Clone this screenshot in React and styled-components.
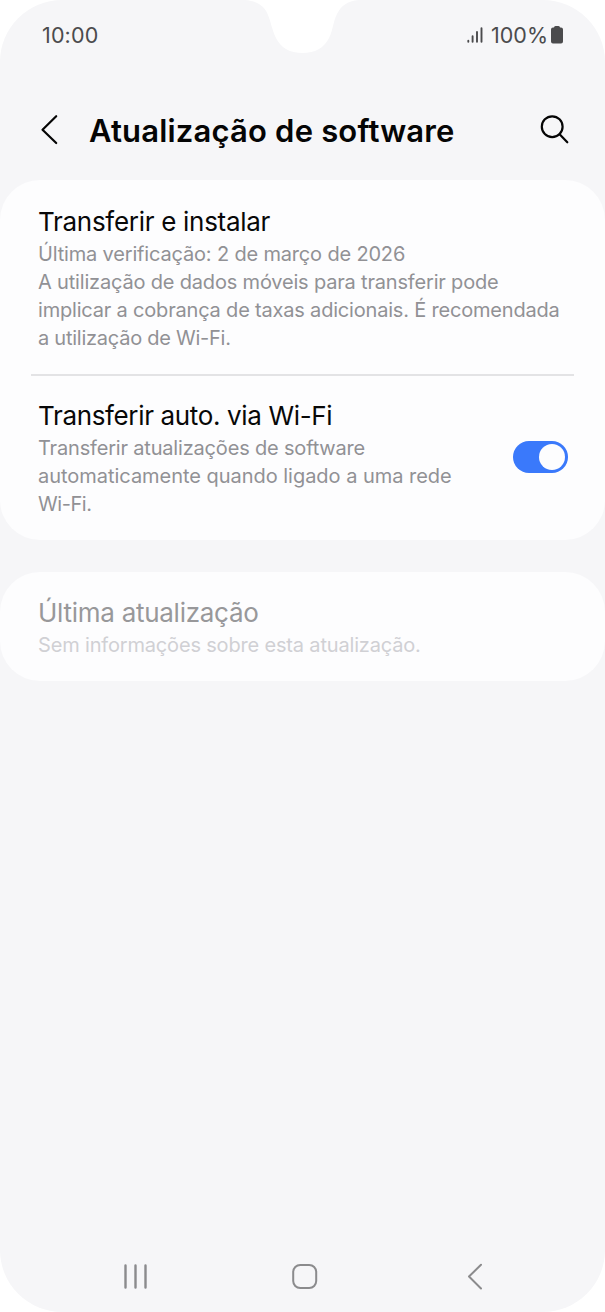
import React, { useState } from "react";
import styled, { createGlobalStyle } from "styled-components";

const GlobalStyle = createGlobalStyle`
  *, *::before, *::after { box-sizing: border-box; }
  body { margin: 0; background: #fff; font-family: Inter, "Liberation Sans", sans-serif; }
  svg { display: block; }
`;

const Screen = styled.main`
  position: relative;
  display: flex;
  flex-direction: column;
  width: 605px;
  height: 1312px;
  overflow: hidden;
  background: #f6f6f8;
  border-radius: 62px;
`;

const Notch = styled.svg`
  position: absolute;
  top: 0;
  left: 245px;
`;

const StatusBar = styled.header`
  display: flex;
  align-items: center;
  justify-content: space-between;
  height: 70px;
  padding: 0 42px;
  color: #4b4b4d;
`;

const StatusGroup = styled.div`
  display: flex;
  align-items: center;
`;

const Line = styled.span`
  display: block;
  white-space: nowrap;
  letter-spacing: ${(p) => p.$track || 0}px;
`;

const StatusText = styled(Line)`
  font-size: 21.5px;
  line-height: 28px;
`;

const BatteryLevel = styled(StatusText)`
  margin: 0 3px 0 7px;
`;

const AppBar = styled.div`
  display: flex;
  align-items: center;
  height: 110px;
  padding: 10px 36px 0 40px;
`;

const IconButton = styled.button`
  display: flex;
  padding: 0;
  border: 0;
  background: none;
  color: ${(p) => p.$color || "#050505"};
`;

const Heading = styled.h1`
  flex: 1;
  margin: 0 0 0 30px;
  padding-top: 2px;
  font-size: 31px;
  font-weight: 600;
  line-height: 40px;
  color: #050505;
`;

const Sections = styled.div`
  display: flex;
  flex: 1;
  flex-direction: column;
  gap: 32px;
`;

const Card = styled.section`
  padding: 0 31px;
  border-radius: 40px;
  background: #fdfdfe;
`;

const Row = styled.div`
  display: flex;
  align-items: center;
  justify-content: space-between;
  padding: ${(p) => p.$top}px 6px 22px 7px;
  color: ${(p) => (p.$disabled ? "#98989a" : "#080808")};
`;

const Divider = styled.hr`
  height: 2px;
  margin: 0;
  border: 0;
  background: #e3e3e5;
`;

const RowTitle = styled.h2`
  margin: 0;
  font-size: 26px;
  font-weight: 400;
  line-height: 37px;
`;

const RowText = styled.p`
  margin: 0;
  font-size: 20px;
  line-height: 28px;
  color: ${(p) => (p.$disabled ? "#d0d0d4" : "#919195")};
`;

const Toggle = styled.button`
  display: flex;
  flex: none;
  justify-content: ${(p) => (p.$on ? "flex-end" : "flex-start")};
  width: 55px;
  height: 32px;
  margin-bottom: 1px;
  padding: 3px;
  border: 0;
  border-radius: 16px;
  background: ${(p) => (p.$on ? "#3a79fb" : "#b9b9bd")};
`;

const Knob = styled.span`
  width: 26px;
  height: 26px;
  border-radius: 50%;
  background: #fdfdfe;
`;

const NavBar = styled.nav`
  display: grid;
  grid-template-columns: 169px 175px 16px;
  align-items: start;
  height: 71px;
  padding: 21px 0 0 123px;
`;

function SettingRow({ title, lines, disabled, top, children }) {
  return (
    <Row $disabled={disabled} $top={top}>
      <div>
        <RowTitle><Line $track={title[1]}>{title[0]}</Line></RowTitle>
        <RowText $disabled={disabled}>
          {lines.map(([text, track]) => <Line key={text} $track={track}>{text}</Line>)}
        </RowText>
      </div>
      {children}
    </Row>
  );
}

export default function App() {
  const [auto, setAuto] = useState(true);
  return (
    <>
      <GlobalStyle />
      <Screen>
        <Notch width="114" height="54" viewBox="0 0 114 54" fill="#fff">
          <path d="M0 0C13 1 20 7 23 15C26 22 27 30 31 38C36 48 45 53 57.500 53C70 53 79 48 84 38C88 30 88 22 92 14C96 6 102 1 114 0Z" />
        </Notch>
        <StatusBar>
          <StatusText $track={0.15}>10:00</StatusText>
          <StatusGroup>
            <svg width="17" height="18" viewBox="0 0 17 18" fill="none" stroke="currentColor" strokeWidth="1.900" strokeLinecap="round">
              <path d="M1.300 14.800v1M5.600 10.200v5.600M10 6v9.800M14.500 2.300v13.500" />
            </svg>
            <BatteryLevel>100%</BatteryLevel>
            <svg width="12" height="18" viewBox="0 0 12 18" fill="currentColor">
              <path d="M3 1.500Q3 0 4.500 0H7.500Q9 0 9 1.500H10Q12 1.500 12 3.500V15.500Q12 17.500 10 17.500H2Q0 17.500 0 15.500V3.500Q0 1.500 2 1.500Z" />
            </svg>
          </StatusGroup>
        </StatusBar>
        <AppBar>
          <IconButton aria-label="Voltar">
            <svg width="19" height="32" viewBox="0 0 19 32" fill="none" stroke="currentColor" strokeWidth="2.200" strokeLinecap="round" strokeLinejoin="round">
              <path d="M16.200 2.200L2.500 15.700L16.200 29" />
            </svg>
          </IconButton>
          <Heading><Line $track={0.18}>Atualização de software</Line></Heading>
          <IconButton aria-label="Pesquisar">
            <svg width="30" height="30" viewBox="0 0 30 30" fill="none" stroke="currentColor" strokeWidth="2.200" strokeLinecap="round">
              <circle cx="13.200" cy="11.700" r="10.400" />
              <path d="M20.600 19.200L28.300 27.300" />
            </svg>
          </IconButton>
        </AppBar>
        <Sections>
          <Card>
            <SettingRow
              top={23}
              title={["Transferir e instalar", -0.29]}
              lines={[
                ["Última verificação: 2 de março de 2026", -0.17],
                ["A utilização de dados móveis para transferir pode", -0.18],
                ["implicar a cobrança de taxas adicionais. É recomendada", -0.19],
                ["a utilização de Wi-Fi.", -0.25],
              ]}
            />
            <Divider />
            <SettingRow
              top={21}
              title={["Transferir auto. via Wi-Fi", -0.35]}
              lines={[
                ["Transferir atualizações de software", -0.18],
                ["automaticamente quando ligado a uma rede", -0.03],
                ["Wi-Fi.", -0.45],
              ]}
            >
              <Toggle role="switch" aria-checked={auto} $on={auto} onClick={() => setAuto(!auto)}>
                <Knob />
              </Toggle>
            </SettingRow>
          </Card>
          <Card>
            <SettingRow
              disabled
              top={22}
              title={["Última atualização", -0.27]}
              lines={[["Sem informações sobre esta atualização.", -0.17]]}
            />
          </Card>
        </Sections>
        <NavBar>
          <IconButton aria-label="Recentes" $color="#8b8b8d">
            <svg width="25" height="28" viewBox="0 0 25 28" stroke="currentColor" strokeWidth="2.400" strokeLinecap="round">
              <path d="M2.500 3.500V25.500M12.500 3.500V25.500M22.500 3.500V25.500" />
            </svg>
          </IconButton>
          <IconButton aria-label="Início" $color="#8b8b8d">
            <svg width="26" height="28" viewBox="0 0 26 28" fill="none" stroke="currentColor" strokeWidth="2">
              <rect x="1.200" y="3" width="23" height="23" rx="7" />
            </svg>
          </IconButton>
          <IconButton aria-label="Voltar" $color="#8b8b8d">
            <svg width="16" height="28" viewBox="0 0 16 28" fill="none" stroke="currentColor" strokeWidth="2" strokeLinecap="round" strokeLinejoin="round">
              <path d="M14 2.800L2 14.500L14 26.500" />
            </svg>
          </IconButton>
        </NavBar>
      </Screen>
    </>
  );
}
